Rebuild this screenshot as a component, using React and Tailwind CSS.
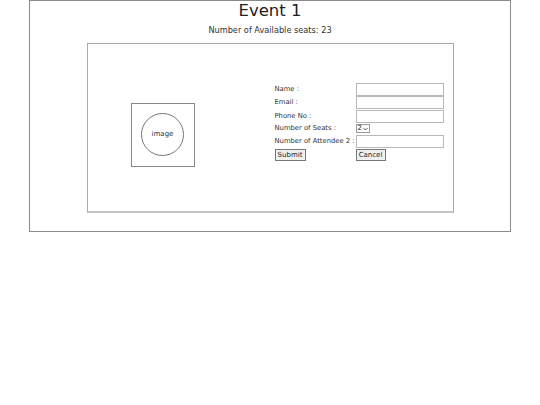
import React from "react";

const font = { fontFamily: '"DejaVu Sans", "Liberation Sans", sans-serif' };

function Row({ label, children }) {
  return (
    <div className="flex items-center h-[13px] mb-[0.5px]">
      <div className="w-[81px] text-[6.8px] text-[#333] whitespace-nowrap leading-none">{label}</div>
      {children}
    </div>
  );
}

function TextInput() {
  return <div className="w-[88px] h-[13px] border border-[#b8b8b8] bg-white"></div>;
}

export default function App() {
  return (
    <div className="w-[540px] h-[405px] bg-white" style={font}>
      <div className="w-[482px] h-[232px] mx-auto border border-[#8a8a8a] flex flex-col items-center">
        <div className="text-[16.5px] leading-none text-[#222] mt-[2px]">Event 1</div>
        <div className="text-[8.2px] leading-none text-[#333] mt-[6px]">Number of Available seats: 23</div>
        <div className="mt-[9px] w-[367px] h-[170px] border border-[#a8a8a8] border-b-[#c4c4c4] border-b-2 flex items-start">
          <div className="ml-[43px] mt-[59px] w-[64px] h-[64px] border border-[#888] flex items-center justify-center">
            <div className="w-[43px] h-[43px] rounded-full border border-[#777] flex items-center justify-center text-[7px] text-[#333]">
              image
            </div>
          </div>
          <div className="ml-[80px] mt-[39px] flex flex-col">
            <Row label="Name :"><TextInput /></Row>
            <Row label="Email :"><TextInput /></Row>
            <Row label="Phone No :"><TextInput /></Row>
            <div className="flex items-center h-[11px] mb-[0.5px]">
              <div className="w-[81px] text-[6.8px] text-[#333] whitespace-nowrap leading-none">Number of Seats :</div>
              <div className="w-[14px] h-[9px] border border-[#999] flex items-center pl-[1px] gap-[1px] text-[7px] leading-none text-[#222]">
                <span>2</span>
                <svg width="5" height="4" viewBox="0 0 5 4"><path d="M0.5 1 L2.5 3 L4.5 1" fill="none" stroke="#333" strokeWidth="0.8" /></svg>
              </div>
            </div>
            <Row label="Number of Attendee 2 :"><TextInput /></Row>
            <div className="flex items-center h-[13px]">
              <div className="w-[81px] flex">
                <div className="flex items-center justify-center w-[31px] h-[12px] pt-[1px] border border-[#777] bg-[#f0f0f0] text-[7px] text-[#222] leading-none">Submit</div>
              </div>
              <div className="flex items-center justify-center w-[30px] h-[12px] pt-[1px] border border-[#777] bg-[#f0f0f0] text-[7px] text-[#222] leading-none">Cancel</div>
            </div>
          </div>
        </div>
      </div>
    </div>
  );
}
